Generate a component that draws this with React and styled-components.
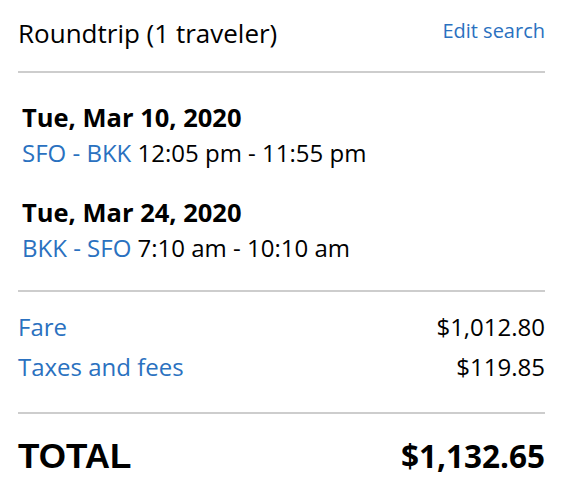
import React from "react";
import styled, { createGlobalStyle } from "styled-components";

const Global = createGlobalStyle`
  html, body { margin: 0; padding: 0; background: #fff; }
  body { font-family: "Open Sans", "Liberation Sans", sans-serif; color: #000; }
`;

const Wrap = styled.div`
  padding: 0 21px 0 18px;
  width: 566px;
  box-sizing: border-box;
`;

const Header = styled.div`
  display: flex;
  justify-content: space-between;
  align-items: flex-start;
  padding-top: 15px;
  height: 71px;
  box-sizing: border-box;
`;

const Title = styled.div`
  font-size: 26px;
  line-height: 36px;
`;

const Link = styled.a`
  color: #2a71c0;
  font-size: 20px;
  line-height: 28px;
  margin-top: 2px;
  text-decoration: none;
`;

const Divider = styled.hr`
  border: 0;
  height: 2px;
  background: #cdcdcd;
  margin: 0;
`;

const Segments = styled.div`
  padding: 26px 0 24px 4px;
  display: flex;
  flex-direction: column;
  gap: 23px;
`;

const Segment = styled.div`
  display: flex;
  flex-direction: column;
`;

const DateLine = styled.div`
  font-size: 25.5px;
  font-weight: 700;
  line-height: 36px;
`;

const Route = styled.div`
  font-size: 24px;
  line-height: 36px;
`;

const Blue = styled.span`
  color: #2a71c0;
`;

const Prices = styled.div`
  padding: 15px 0 25px;
`;

const PriceRow = styled.div`
  display: flex;
  justify-content: space-between;
  font-size: 24px;
  line-height: 40px;
`;

const TotalRow = styled.div`
  display: flex;
  justify-content: space-between;
  align-items: baseline;
  font-weight: 700;
  line-height: 44px;
  padding-top: 20px;
`;

const TotalLabel = styled.span`
  font-family: "Liberation Sans", Arial, sans-serif;
  font-size: 35px;
`;

const TotalAmount = styled.span`
  font-size: 31.5px;
`;

export default function App() {
  return (
    <>
      <Global />
      <Wrap>
        <Header>
          <Title>Roundtrip (1 traveler)</Title>
          <Link href="#">Edit search</Link>
        </Header>
        <Divider />
        <Segments>
          <Segment>
            <DateLine>Tue, Mar 10, 2020</DateLine>
            <Route><Blue>SFO - BKK</Blue> 12:05 pm - 11:55 pm</Route>
          </Segment>
          <Segment>
            <DateLine>Tue, Mar 24, 2020</DateLine>
            <Route><Blue>BKK - SFO</Blue> 7:10 am - 10:10 am</Route>
          </Segment>
        </Segments>
        <Divider />
        <Prices>
          <PriceRow><Blue>Fare</Blue><span>$1,012.80</span></PriceRow>
          <PriceRow><Blue>Taxes and fees</Blue><span>$119.85</span></PriceRow>
        </Prices>
        <Divider />
        <TotalRow><TotalLabel>TOTAL</TotalLabel><TotalAmount>$1,132.65</TotalAmount></TotalRow>
      </Wrap>
    </>
  );
}
